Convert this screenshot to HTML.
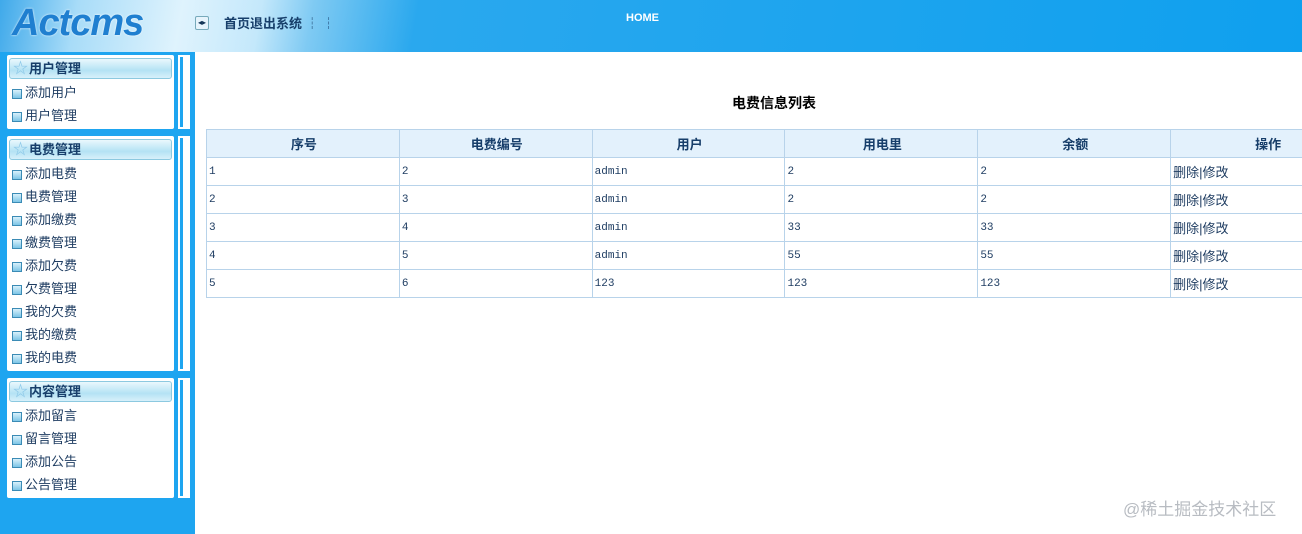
<!DOCTYPE html>
<html><head><meta charset="utf-8"><style>
*{margin:0;padding:0;box-sizing:border-box}
body{width:1302px;height:534px;overflow:hidden;background:#fff;font-family:"Liberation Sans","Noto Sans CJK SC",sans-serif;position:relative}
#hd{position:absolute;left:0;top:0;width:1302px;height:52px;background:linear-gradient(100deg,#3fa9ea 0%,#a8dcf8 6%,#dff3fd 14%,#c4e8fb 20%,#7fcaf3 24%,#2aa8ee 32%,#0fa0ee 100%)}
.logo{position:absolute;left:12px;top:2px;font:italic bold 38px "Liberation Sans",sans-serif;color:#1f7fd0;letter-spacing:-1px;text-shadow:0 0 2px #fff}
.tog{position:absolute;left:195px;top:16px;width:14px;height:14px;border:1px solid #7ab;border-radius:2px;background:#e6f4fc;font-size:8px;color:#135;text-align:center;line-height:12px}
.nav{position:absolute;left:224px;top:13px;font-size:13px;font-weight:bold;color:#173e6a}
.home{position:absolute;left:626px;top:12px;font-size:11px;font-weight:bold;color:#fff}
#sb{position:absolute;left:0;top:52px;width:195px;height:482px;background:#1ea5f0}
.pn{position:absolute;left:7px;width:167px;background:#fff;border-radius:2px}
.st{position:absolute;left:178px;width:12px;background:#fff}
.st:before{content:"";position:absolute;left:2px;top:2px;bottom:2px;width:3px;background:#1ea5f0}
.ph{margin:3px 2px 0 2px;height:21px;border:1px solid #8cc9e0;border-radius:3px;background:linear-gradient(#eaf8fd,#b4e2f4 60%,#d7f0fa);font-size:13px;font-weight:bold;color:#173e6a;padding-left:19px;line-height:20px;position:relative}
.ph:before{content:"☆";position:absolute;left:3px;top:0;color:#8cc8e8;font-size:15px}
.it{height:23px;line-height:23px;font-size:13px;color:#1f3d62;padding-left:18px;position:relative}
.it:before{content:"";position:absolute;left:5px;top:8px;width:8px;height:8px;border:1px solid #3b8bb5;background:linear-gradient(#d9f1fb,#7cc5e6)}
.pn .list{padding-top:2px}
h3{position:absolute;left:732px;top:93px;font-size:14px;color:#000}
table{position:absolute;left:206px;top:129px;border-collapse:collapse;width:1158px;table-layout:fixed}
td,th{border:1px solid #b8d3ea;height:28px;font-size:11px;color:#1f3d62;text-align:left;padding-left:2px;font-family:"Liberation Mono","Noto Sans CJK SC",monospace}
th{background:#e3f1fc;text-align:center;font-size:13px;font-family:"Liberation Sans","Noto Sans CJK SC",sans-serif;color:#173e6a}
td.op{font-size:13px;font-family:"Liberation Sans","Noto Sans CJK SC",sans-serif}
.wm{position:absolute;left:1123px;top:495px;font-size:17px;color:#b8bcc2}
</style></head><body>
<div id="hd"><div class="logo">Actcms</div><div class="tog">◂▸</div><div class="nav">首页退出系统 ┆ ┆</div><div class="home">HOME</div></div>
<div id="sb">
<div class="pn" style="top:3px;height:74px"><div class="ph">用户管理</div><div class="list"><div class="it">添加用户</div><div class="it">用户管理</div></div></div>
<div class="st" style="top:3px;height:74px"></div>
<div class="pn" style="top:84px;height:235px"><div class="ph">电费管理</div><div class="list"><div class="it">添加电费</div><div class="it">电费管理</div><div class="it">添加缴费</div><div class="it">缴费管理</div><div class="it">添加欠费</div><div class="it">欠费管理</div><div class="it">我的欠费</div><div class="it">我的缴费</div><div class="it">我的电费</div></div></div>
<div class="st" style="top:84px;height:235px"></div>
<div class="pn" style="top:326px;height:120px"><div class="ph">内容管理</div><div class="list"><div class="it">添加留言</div><div class="it">留言管理</div><div class="it">添加公告</div><div class="it">公告管理</div></div></div>
<div class="st" style="top:326px;height:120px"></div>
</div>
<h3>电费信息列表</h3>
<table>
<tr><th>序号</th><th>电费编号</th><th>用户</th><th>用电里</th><th>余额</th><th>操作</th></tr>
<tr><td>1</td><td>2</td><td>admin</td><td>2</td><td>2</td><td class="op">删除|修改</td></tr>
<tr><td>2</td><td>3</td><td>admin</td><td>2</td><td>2</td><td class="op">删除|修改</td></tr>
<tr><td>3</td><td>4</td><td>admin</td><td>33</td><td>33</td><td class="op">删除|修改</td></tr>
<tr><td>4</td><td>5</td><td>admin</td><td>55</td><td>55</td><td class="op">删除|修改</td></tr>
<tr><td>5</td><td>6</td><td>123</td><td>123</td><td>123</td><td class="op">删除|修改</td></tr>
</table>
<div class="wm">@稀土掘金技术社区</div>
</body></html>
